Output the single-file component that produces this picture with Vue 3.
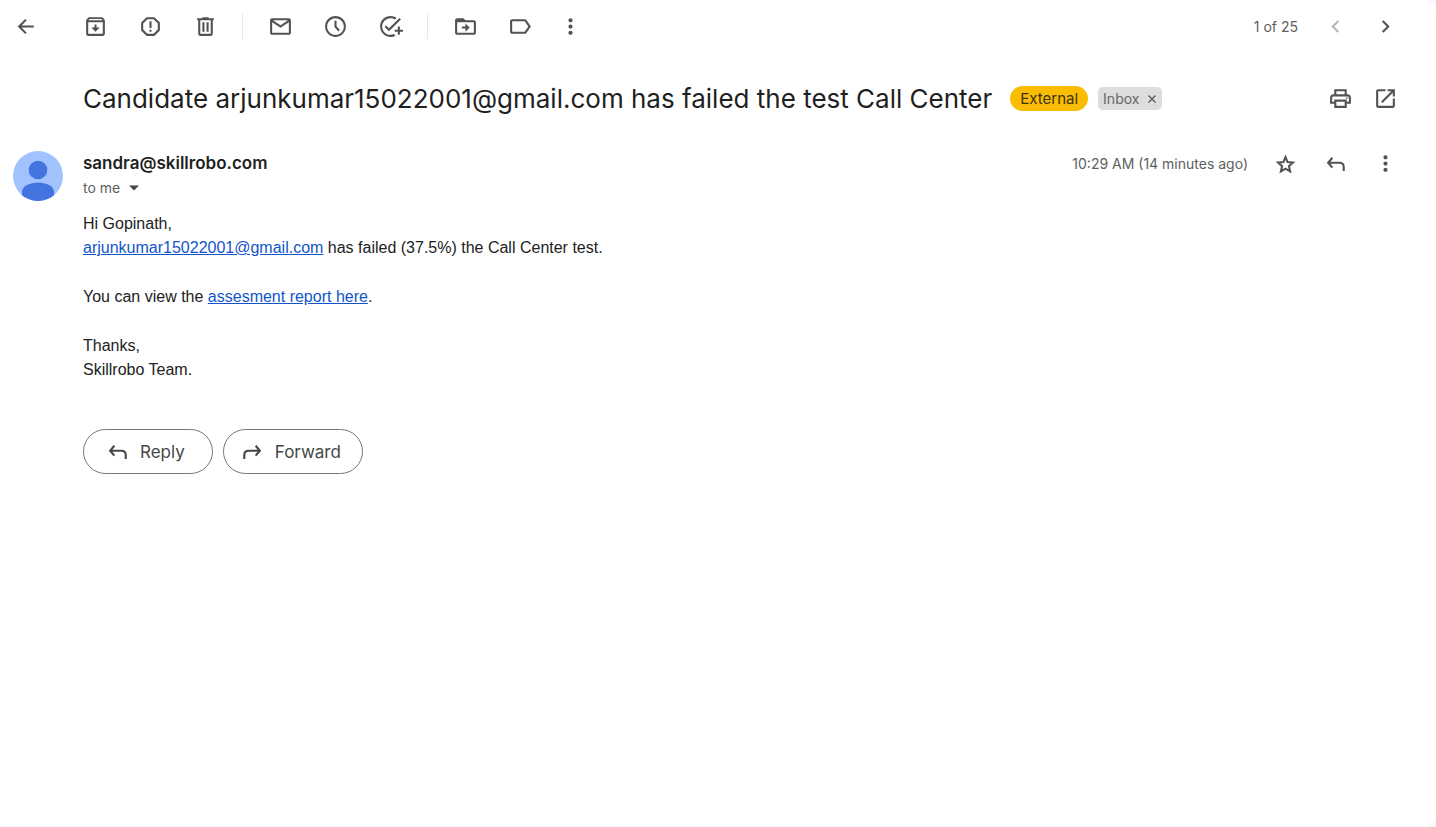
<script setup>
const toolGroups = [
  [
    { name: 'Archive', path: 'M20.54 5.230l-1.390-1.680C18.880 3.210 18.470 3 18 3H6c-.47 0-.88.21-1.160.55L3.460 5.230C3.170 5.570 3 6.020 3 6.500V19c0 1.100.9 2 2 2h14c1.100 0 2-.9 2-2V6.500c0-.48-.17-.93-.46-1.270zM6.240 4.800h11.520l.93 1.200H5.320zM19 19H5V8h14v11zM11 10h2v3h3l-4 4-4-4h3z' },
    { name: 'Report spam', path: 'M15.730 3H8.270L3 8.270v7.460L8.270 21h7.460L21 15.730V8.270L15.730 3zM19 14.900L14.900 19H9.100L5 14.900V9.100L9.100 5h5.800L19 9.100v5.800zM11 7h2v6.500h-2zM11 15h2v2h-2z' },
    { name: 'Delete', path: 'M15 4V3H9v1H4v2h1v13c0 1.100.9 2 2 2h10c1.100 0 2-.9 2-2V6h1V4h-5zm2 15H7V6h10v13zM9 8h2v9H9zM13 8h2v9h-2z' }
  ],
  [
    { name: 'Mark as unread', path: 'M20 4H4c-1.100 0-2 .9-2 2v12c0 1.100.9 2 2 2h16c1.100 0 2-.9 2-2V6c0-1.100-.9-2-2-2zm-.8 2L12 10.800 4.800 6h14.400zM4 18V7.870l8 5.330 8-5.330V18H4z' },
    { name: 'Snooze', path: 'M12 2C6.500 2 2 6.500 2 12s4.500 10 10 10 10-4.500 10-10S17.500 2 12 2zm0 18c-4.410 0-8-3.590-8-8s3.590-8 8-8 8 3.590 8 8-3.590 8-8 8zM13 6.500h-2V12.500l3.800 4.200 1.400-1.300L13 11.800z' },
    { name: 'Add to tasks', path: 'M22 5.180L10.590 16.600l-4.240-4.240 1.410-1.410 2.830 2.830 10-10L22 5.180zM12 20c-4.410 0-8-3.590-8-8s3.590-8 8-8c1.570 0 3.040.46 4.280 1.250l1.450-1.450C16.100 2.670 14.130 2 12 2 6.480 2 2 6.480 2 12s4.480 10 10 10c1.730 0 3.360-.44 4.780-1.220l-1.500-1.500c-1 .46-2.110.72-3.280.72zm7-5h-3v2h3v3h2v-3h3v-2h-3v-3h-2v3z' }
  ],
  [
    { name: 'Move to', path: 'M20 6h-8l-2-2H4c-1.100 0-2 .9-2 2v12c0 1.100.9 2 2 2h16c1.100 0 2-.9 2-2V8c0-1.100-.9-2-2-2zm0 12H4V8h16v10zM12 9l4 4-4 4V14H8.500v-2H12z' },
    { name: 'Labels', path: 'M16 5H4c-1.100 0-2 .9-2 2v10c0 1.100.9 2 2 2h12c.67 0 1.270-.33 1.630-.84L22 12l-4.370-6.160C17.270 5.330 16.670 5 16 5zm0 12H4V7h12l3.550 5L16 17z' }
  ]
]
const dots = 'M12 8c1.100 0 2-.9 2-2s-.9-2-2-2-2 .9-2 2 .9 2 2 2zm0 2c-1.100 0-2 .9-2 2s.9 2 2 2 2-.9 2-2-.9-2-2-2zm0 6c-1.100 0-2 .9-2 2s.9 2 2 2 2-.9 2-2-.9-2-2-2z'
const back = 'M19 11H7.300l4.900-4.900L10.800 4.700 3.500 12l7.300 7.300 1.400-1.400L7.300 13H19v-2z'
const older = 'M10 6L8.590 7.410 13.170 12l-4.580 4.590L10 18l6-6z'
const newer = 'M15.410 7.410L14 6l-6 6 6 6 1.410-1.410L10.830 12z'
const print = 'M19 8h-1V3H6v5H5c-1.660 0-3 1.340-3 3v6h4v4h12v-4h4v-6c0-1.660-1.340-3-3-3zM8 5h8v3H8V5zm8 14H8v-4h8v4zm2-4v-2H6v2H4v-4c0-.55.45-1 1-1h14c.55 0 1 .45 1 1v4h-2zM17 11h2v1h-2z'
const popOut = 'M19 19H5V5h7V3H5c-1.110 0-2 .9-2 2v14c0 1.100.89 2 2 2h14c1.100 0 2-.9 2-2v-7h-2v7zM14 3v2h3.590l-9.830 9.830 1.410 1.410L19 6.410V10h2V3h-7z'
const star = 'M12 6l2 4.700 5.100.5-3.800 3.400 1.100 5L12 17l-4.400 2.600 1.100-5-3.800-3.400 5.100-.5z'
const reply = 'M9 6.500L4.900 11.300l4.100 4.700M5.200 11.300h10.400c2.800 0 4.300 1.600 4.300 4.200v3.700'
</script>

<template>
  <main class="mail">
    <nav class="toolbar" aria-label="Message actions">
      <button class="tool back" aria-label="Back to inbox">
        <svg class="icon" viewBox="0 0 24 24"><path :d="back" /></svg>
      </button>
      <div v-for="(group, i) in toolGroups" :key="i" class="group">
        <button v-for="tool in group" :key="tool.name" class="tool" :aria-label="tool.name">
          <svg class="icon" viewBox="0 0 24 24"><path fill-rule="evenodd" :d="tool.path" /></svg>
        </button>
      </div>
      <button class="tool slim" aria-label="More">
        <svg class="icon" viewBox="0 0 24 24"><path :d="dots" /></svg>
      </button>
      <div class="pager">
        <span class="count">1 of 25</span>
        <button class="tool round" aria-label="Newer" disabled>
          <svg class="icon" viewBox="0 0 24 24"><path :d="newer" /></svg>
        </button>
        <button class="tool round" aria-label="Older">
          <svg class="icon" viewBox="0 0 24 24"><path :d="older" /></svg>
        </button>
      </div>
    </nav>

    <header class="subject">
      <h1>Candidate arjunkumar15022001@gmail.com has failed the test Call Center</h1>
      <span class="external">External</span>
      <span class="label">Inbox
        <button class="remove" aria-label="Remove label Inbox">
          <svg viewBox="0 0 10 10"><path d="M1.500 1.500l7 7M8.500 1.500l-7 7" /></svg>
        </button>
      </span>
      <div class="subject-tools">
        <button class="tool small" aria-label="Print">
          <svg class="icon" viewBox="0 0 24 24"><path :d="print" /></svg>
        </button>
        <button class="tool small" aria-label="Open in new window">
          <svg class="icon" viewBox="0 0 24 24"><path :d="popOut" /></svg>
        </button>
      </div>
    </header>

    <article class="message">
      <svg class="avatar" viewBox="0 0 50 50" aria-hidden="true">
        <defs><clipPath id="avatar-clip"><circle cx="25" cy="25" r="25" /></clipPath></defs>
        <g clip-path="url(#avatar-clip)">
          <rect width="50" height="50" fill="#a0c2ff" />
          <circle cx="25" cy="19" r="9.300" fill="#4374e0" />
          <path d="M9 50V41c0-6 8-9.500 16-9.500S41 35 41 41v9z" fill="#4374e0" />
        </g>
      </svg>
      <div class="content">
        <div class="meta">
          <div>
            <h2>sandra@skillrobo.com</h2>
            <button class="recipient">to me
              <svg viewBox="0 0 10 6"><path d="M0 .5h10L5 5.500z" /></svg>
            </button>
          </div>
          <div class="meta-tools">
            <time>10:29 AM (14 minutes ago)</time>
            <button class="tool round" aria-label="Star">
              <svg class="icon line" viewBox="0 0 24 24"><path :d="star" /></svg>
            </button>
            <button class="tool round" aria-label="Reply">
              <svg class="icon line" viewBox="0 0 24 24"><path :d="reply" /></svg>
            </button>
            <button class="tool round" aria-label="More message options">
              <svg class="icon" viewBox="0 0 24 24"><path :d="dots" /></svg>
            </button>
          </div>
        </div>

        <div class="body">
          <p>Hi Gopinath,<br /><a href="mailto:arjunkumar15022001@gmail.com">arjunkumar15022001@gmail.com</a> has failed (37.5%) the Call Center test.</p>
          <p>You can view the <a href="#report">assesment report here</a>.</p>
          <p>Thanks,<br />Skillrobo Team.</p>
        </div>

        <div class="actions">
          <button class="pill">
            <svg class="icon line" viewBox="0 0 24 24"><path :d="reply" /></svg>Reply
          </button>
          <button class="pill forward">
            <svg class="icon line mirrored" viewBox="0 0 24 24"><path :d="reply" /></svg>Forward
          </button>
        </div>
      </div>
    </article>
  </main>
</template>

<style>
body {
  margin: 0;
  background: #f6f8fc;
}
</style>

<style scoped>
.mail {
  box-sizing: border-box;
  min-height: 100vh;
  background: #fff;
  border-radius: 0 12px 12px 0;
  color: #1f1f1f;
  font-family: Inter, "Open Sans", sans-serif;
}
button {
  margin: 0;
  padding: 0;
  border: 0;
  background: none;
  color: inherit;
  font: inherit;
  cursor: pointer;
}
.toolbar {
  display: flex;
  align-items: center;
  height: 53px;
  padding-right: 26px;
}
.tool {
  display: flex;
  align-items: center;
  justify-content: center;
  flex: none;
  width: 55px;
  height: 45px;
  color: #505352;
}
.back {
  width: 52px;
  margin-right: 16px;
}
.slim,
.small {
  width: 45px;
}
.round {
  width: 50px;
}
.tool:disabled {
  color: #b4b5b5;
}
.icon {
  display: block;
  width: 25px;
  height: 25px;
  fill: currentColor;
}
.line {
  fill: none;
  stroke: currentColor;
  stroke-width: 2;
}
.group {
  display: flex;
  align-items: center;
}
.group + .group::before {
  content: "";
  width: 1px;
  height: 25px;
  margin: 0 10px 0 9px;
  background: #e4e7e9;
}
.pager {
  display: flex;
  align-items: center;
  margin-left: auto;
}
.count {
  margin-right: 12px;
  color: #5e5e5e;
  font-size: 14px;
}
.subject {
  display: flex;
  align-items: center;
  margin-top: 20px;
  padding: 0 28px 0 83px;
  height: 51px;
}
h1 {
  margin: 0 18px 0 0;
  font-size: 26px;
  line-height: 36px;
  font-weight: 400;
}
.external {
  margin-right: 10px;
  padding: 0 10px;
  border-radius: 13px;
  background: #fbbc04;
  color: #3a3212;
  font-size: 15px;
  line-height: 25px;
}
.label {
  display: flex;
  align-items: center;
  gap: 8px;
  padding: 0 5px;
  border-radius: 5px;
  background: #ddd;
  color: #666;
  font-size: 14px;
  line-height: 23px;
}
.remove svg {
  display: block;
  width: 10px;
  height: 10px;
  fill: none;
  stroke: #555;
  stroke-width: 1.300;
}
.subject-tools {
  display: flex;
  margin-left: auto;
}
.message {
  display: flex;
  margin-top: 27px;
  padding: 0 26px 0 13px;
}
.avatar {
  flex: none;
  width: 50px;
  height: 50px;
  margin-right: 20px;
}
.content {
  flex: 1;
}
.meta {
  display: flex;
  justify-content: space-between;
}
h2 {
  margin: 0;
  font-size: 17px;
  line-height: 24px;
  font-weight: 600;
}
.recipient {
  display: flex;
  align-items: center;
  gap: 9px;
  color: #5e5e5e;
  font-size: 14px;
  line-height: 26px;
}
.recipient svg {
  width: 10px;
  height: 6px;
  fill: #444746;
}
.meta-tools {
  display: flex;
  align-items: center;
  height: 25px;
}
time {
  margin-right: 12px;
  color: #5e5e5e;
  font-size: 14px;
}
.body {
  margin-top: 11px;
  color: #222;
  font-family: "Liberation Sans", Arial, sans-serif;
  font-size: 16px;
  line-height: 24px;
}
.body p {
  margin: 0 0 25px;
}
.body a {
  color: #1155cc;
}
.actions {
  display: flex;
  gap: 10px;
  margin-top: 47px;
}
.pill {
  display: flex;
  align-items: center;
  gap: 10px;
  height: 45px;
  padding: 0 27px 0 21px;
  border: 1px solid #747775;
  border-radius: 23px;
  color: #444746;
  font-size: 17px;
}
.forward {
  padding: 0 21px 0 16px;
}
.mirrored {
  transform: scaleX(-1);
}
</style>
